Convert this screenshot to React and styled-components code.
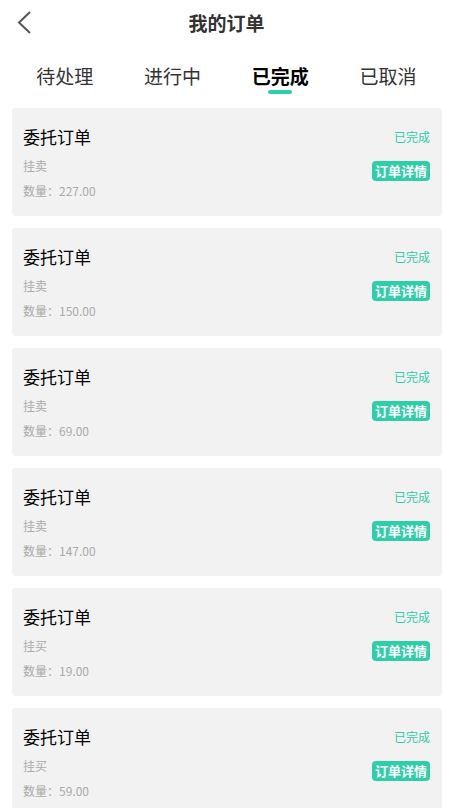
import React from 'react';
import styled, { createGlobalStyle } from 'styled-components';

const Global = createGlobalStyle`
  body {
    margin: 0;
    background: #fff;
    font-family: "Noto Sans CJK SC", "Noto Sans", sans-serif;
  }
`;

const Page = styled.div`
  width: 453px;
  display: flex;
  flex-direction: column;
`;

const Header = styled.div`
  height: 44px;
  display: flex;
  align-items: center;
  justify-content: center;
  position: relative;
`;

const Back = styled.div`
  position: absolute;
  left: 14px;
  top: 9px;
  width: 20px;
  height: 28px;
`;

const Title = styled.div`
  font-size: 19px;
  font-weight: 700;
  color: #333;
`;

const Tabs = styled.div`
  display: grid;
  grid-template-columns: repeat(4, 1fr);
  margin: 19px 11px 0;
`;

const Tab = styled.div`
  display: flex;
  flex-direction: column;
  align-items: center;
  font-size: 19px;
  line-height: 26px;
  color: ${p => (p.$active ? '#000' : '#333')};
  font-weight: ${p => (p.$active ? 700 : 400)};
`;

const Underline = styled.div`
  margin-top: 1px;
  width: 24px;
  height: 4px;
  border-radius: 2px;
  background: ${p => (p.$show ? '#2ecfa8' : 'transparent')};
`;

const List = styled.div`
  display: flex;
  flex-direction: column;
  gap: 12px;
  padding: 14px 11px 0 12px;
`;

const Card = styled.div`
  background: #f2f2f2;
  border-radius: 4px;
  height: 108px;
  box-sizing: border-box;
  padding: 17px 12px 0 11px;
  display: flex;
  justify-content: space-between;
`;

const Left = styled.div`
  display: flex;
  flex-direction: column;
`;

const Name = styled.div`
  font-size: 17px;
  line-height: 24px;
  color: #000;
`;

const Sub = styled.div`
  font-size: 12px;
  line-height: 18px;
  color: #aaa;
  margin-top: ${p => p.$mt}px;
`;

const Right = styled.div`
  display: flex;
  flex-direction: column;
  align-items: flex-end;
`;

const Status = styled.div`
  font-size: 12px;
  line-height: 24px;
  color: #2ecfa8;
`;

const DetailBtn = styled.div`
  margin-top: 12px;
  height: 20px;
  padding: 0 3px;
  border-radius: 4px;
  background: #2ecfa8;
  color: #fff;
  font-size: 13px;
  font-weight: 700;
  line-height: 20px;
`;

const orders = [
  { type: '挂卖', qty: '227.00' },
  { type: '挂卖', qty: '150.00' },
  { type: '挂卖', qty: '69.00' },
  { type: '挂卖', qty: '147.00' },
  { type: '挂买', qty: '19.00' },
  { type: '挂买', qty: '59.00' },
];

const tabs = ['待处理', '进行中', '已完成', '已取消'];

export default function App() {
  return (
    <Page>
      <Global />
      <Header>
        <Back>
          <svg width="20" height="28" viewBox="0 0 20 28">
            <path d="M16 3 L5 13.5 L16 24" fill="none" stroke="#555" strokeWidth="2" />
          </svg>
        </Back>
        <Title>我的订单</Title>
      </Header>
      <Tabs>
        {tabs.map((t, i) => (
          <Tab key={t} $active={i === 2}>
            {t}
            <Underline $show={i === 2} />
          </Tab>
        ))}
      </Tabs>
      <List>
        {orders.map((o, i) => (
          <Card key={i}>
            <Left>
              <Name>委托订单</Name>
              <Sub $mt={8}>{o.type}</Sub>
              <Sub $mt={7}>数量：{o.qty}</Sub>
            </Left>
            <Right>
              <Status>已完成</Status>
              <DetailBtn>订单详情</DetailBtn>
            </Right>
          </Card>
        ))}
      </List>
    </Page>
  );
}
